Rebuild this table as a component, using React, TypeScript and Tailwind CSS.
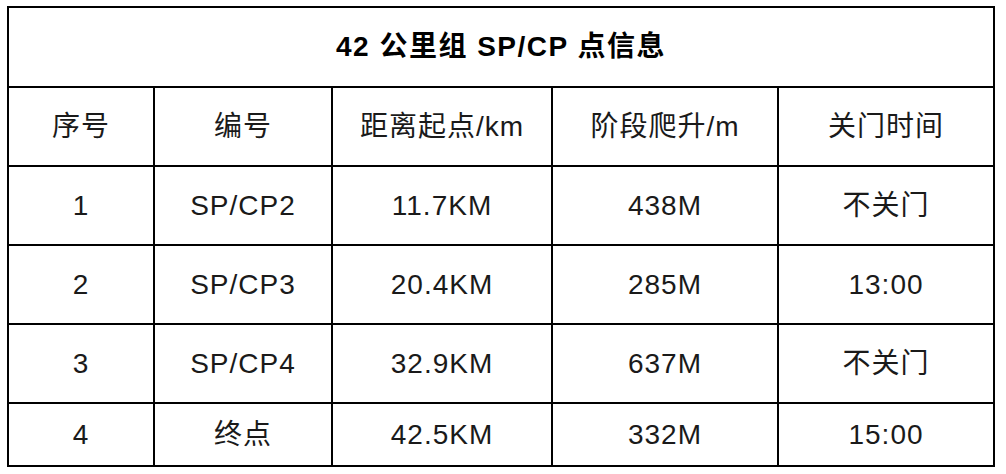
import * as React from 'react'

const rows = [
  ['1', 'SP/CP2', '11.7KM', '438M', '不关门'],
  ['2', 'SP/CP3', '20.4KM', '285M', '13:00'],
  ['3', 'SP/CP4', '32.9KM', '637M', '不关门'],
  ['4', '终点', '42.5KM', '332M', '15:00'],
]

const headers = ['序号', '编号', '距离起点/km', '阶段爬升/m', '关门时间']
const widths = ['w-[146px]', 'w-[178px]', 'w-[220px]', 'w-[226px]', 'w-[216px]']

export default function App() {
  return (
    <div
      className="w-[1006px] h-[474px] bg-white pl-[7px] pt-[6px]"
      style={{ fontFamily: '"Liberation Sans", "Noto Sans CJK SC", sans-serif' }}
    >
      <table className="border-collapse text-[28px] text-[#1a1a1a] text-center leading-none tracking-[1px]">
        <thead>
          <tr className="h-[80px]">
            <th colSpan={5} className="border-2 border-black font-bold text-black text-[28px] tracking-[1.5px]">
              42 公里组 SP/CP 点信息
            </th>
          </tr>
          <tr className="h-[79px]">
            {headers.map((h, i) => (
              <th key={h} className={`border-2 border-black font-normal ${widths[i]}`}>
                {h}
              </th>
            ))}
          </tr>
        </thead>
        <tbody>
          {rows.map((r, ri) => (
            <tr key={ri} className={ri === 3 ? 'h-[63px]' : 'h-[79px]'}>
              {r.map((c, ci) => (
                <td key={ci} className="border-2 border-black">
                  {c}
                </td>
              ))}
            </tr>
          ))}
        </tbody>
      </table>
    </div>
  )
}
